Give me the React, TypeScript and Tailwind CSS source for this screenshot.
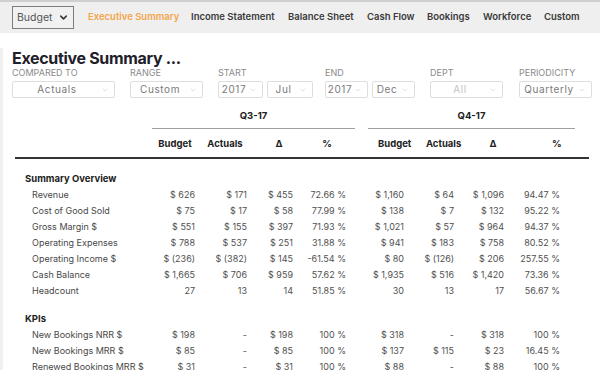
import React from "react";
import { ChevronDown } from "lucide-react";

const F = { fontFamily: "Inter, 'Open Sans', 'Liberation Sans', sans-serif" };

function Sel({ w, text, disabled }: { w: string; text: string; disabled?: boolean }) {
  return (
    <div className={`${w} h-[17px] border border-[#dedede] rounded-[2px] flex items-center bg-white`}>
      <span className={`flex-1 text-center text-[10px] tracking-[0.06em] ${disabled ? "text-[#c4c4c4]" : "text-[#7a7a7a]"}`}>{text}</span>
      <ChevronDown size={8} strokeWidth={1.5} className="text-[#c0c0c0] mr-[5px]" />
    </div>
  );
}

type Row = { label: string; v: string[] };
const summary: Row[] = [
  { label: "Revenue", v: ["$ 626", "$ 171", "$ 455", "72.66 %", "$ 1,160", "$ 64", "$ 1,096", "94.47 %"] },
  { label: "Cost of Good Sold", v: ["$ 75", "$ 17", "$ 58", "77.99 %", "$ 138", "$ 7", "$ 132", "95.22 %"] },
  { label: "Gross Margin $", v: ["$ 551", "$ 155", "$ 397", "71.93 %", "$ 1,021", "$ 57", "$ 964", "94.37 %"] },
  { label: "Operating Expenses", v: ["$ 788", "$ 537", "$ 251", "31.88 %", "$ 941", "$ 183", "$ 758", "80.52 %"] },
  { label: "Operating Income $", v: ["$ (236)", "$ (382)", "$ 145", "-61.54 %", "$ 80", "$ (126)", "$ 206", "257.55 %"] },
  { label: "Cash Balance", v: ["$ 1,665", "$ 706", "$ 959", "57.62 %", "$ 1,935", "$ 516", "$ 1,420", "73.36 %"] },
  { label: "Headcount", v: ["27", "13", "14", "51.85 %", "30", "13", "17", "56.67 %"] },
];
const kpis: Row[] = [
  { label: "New Bookings NRR $", v: ["$ 198", "-", "$ 198", "100 %", "$ 318", "-", "$ 318", "100 %"] },
  { label: "New Bookings MRR $", v: ["$ 85", "-", "$ 85", "100 %", "$ 137", "$ 115", "$ 23", "16.45 %"] },
  { label: "Renewed Bookings MRR $", v: ["$ 31", "-", "$ 31", "100 %", "$ 88", "-", "$ 88", "100 %"] },
];

const grid = "grid grid-cols-[150px_45px_52px_46px_53px_20px_38px_50px_50px_56px_40px]";

function DataRow({ r }: { r: Row }) {
  return (
    <div className={`${grid} h-[16px] items-center text-[9px] text-[#505050]`}>
      <div className="pl-[32px] whitespace-nowrap text-[#484848]">{r.label}</div>
      <div className="text-right whitespace-nowrap">{r.v[0]}</div>
      <div className="text-right whitespace-nowrap">{r.v[1]}</div>
      <div className="text-right whitespace-nowrap">{r.v[2]}</div>
      <div className="text-right whitespace-nowrap">{r.v[3]}</div>
      <div />
      <div className="text-right whitespace-nowrap">{r.v[4]}</div>
      <div className="text-right whitespace-nowrap">{r.v[5]}</div>
      <div className="text-right whitespace-nowrap">{r.v[6]}</div>
      <div className="text-right whitespace-nowrap">{r.v[7]}</div>
      <div />
    </div>
  );
}

export default function App() {
  const nav: [string, string][] = [
    ["Income Statement", "w-[97px]"],
    ["Balance Sheet", "w-[79px]"],
    ["Cash Flow", "w-[60px]"],
    ["Bookings", "w-[56px]"],
    ["Workforce", "w-[61px]"],
    ["Custom", ""],
  ];
  return (
    <div style={F} className="w-[600px] h-[370px] overflow-hidden bg-white">
      {/* top bar */}
      <div className="h-[33px] bg-[#efefef] border-t-2 border-[#cfcfcf] flex items-center">
        <div className="ml-[12px] w-[62px] h-[23px] border-[1.5px] border-[#7d7d7d] bg-[#f1f1f1] flex items-center justify-between px-[4px]">
          <span className="text-[10.5px] text-[#555]">Budget</span>
          <ChevronDown size={11} strokeWidth={3.2} className="text-[#333]" />
        </div>
        <div className="ml-[14px] flex items-center text-[9.5px] font-semibold text-[#3a3a3a] whitespace-nowrap">
          <span className="w-[103px] text-[#f4a54c]">Executive Summary</span>
          {nav.map(([n, w]) => (
            <span key={n} className={w}>{n}</span>
          ))}
        </div>
      </div>

      <div className="border-l-[3px] border-[#f0f0f0] h-[337px]">
        {/* title */}
        <div className="mt-[15px] ml-[9px] h-[20px] leading-[20px] text-[16px] tracking-[-0.02em] font-bold text-[#1f2029]">Executive Summary ...</div>
        {/* filters */}
        <div className="ml-[9px] flex text-[9px] text-[#8a8a8a] uppercase leading-[10px] h-[10px]">
          <div className="w-[118px]">Compared To</div>
          <div className="w-[88px]">Range</div>
          <div className="w-[107px]">Start</div>
          <div className="w-[105px]">End</div>
          <div className="w-[89px]">Dept</div>
          <div>Periodicity</div>
        </div>
        <div className="ml-[9px] mt-[3px] flex">
          <div className="w-[118px]"><Sel w="w-[103px]" text="Actuals" /></div>
          <div className="w-[88px]"><Sel w="w-[73px]" text="Custom" /></div>
          <div className="w-[107px] flex gap-[4px]"><Sel w="w-[45px]" text="2017" /><Sel w="w-[46px]" text="Jul" /></div>
          <div className="w-[105px] flex gap-[4px]"><Sel w="w-[43px]" text="2017" /><Sel w="w-[43px]" text="Dec" /></div>
          <div className="w-[89px]"><Sel w="w-[73px]" text="All" disabled /></div>
          <div><Sel w="w-[73px]" text="Quarterly" /></div>
        </div>

        {/* table */}
        <div className="-ml-[3px]">
          <div className="mt-[10px] flex text-[9.5px] font-bold text-[#222]">
            <div className="ml-[152px] w-[203px] h-[21px] pb-[4px] border-b border-[#a0a0a0] text-center leading-[16px]">Q3-17</div>
            <div className="ml-[13px] w-[207px] h-[21px] pb-[4px] border-b border-[#a0a0a0] text-center leading-[16px]">Q4-17</div>
          </div>
          <div className={`${grid} mt-[7px] h-[16px] items-center text-[9.5px] font-bold text-[#222] whitespace-nowrap`}>
            <div />
            <div className="text-center pl-[5px]">Budget</div>
            <div className="text-center pl-[8px]">Actuals</div>
            <div className="text-center pl-[18px]">Δ</div>
            <div className="text-center pl-[15px]">%</div>
            <div />
            <div className="text-center pl-[12px]">Budget</div>
            <div className="text-center pl-[22px]">Actuals</div>
            <div className="text-center pl-[28px]">Δ</div>
            <div className="text-center pl-[48px]">%</div>
            <div />
          </div>
          <div className="mt-[5px] ml-[15px] w-[574px] h-[2px] bg-[#333]" />

          <div className="mt-[12px] h-[16px] leading-[16px] pl-[25px] text-[9.5px] font-bold text-[#222]">Summary Overview</div>
          {summary.map((r) => (
            <DataRow key={r.label} r={r} />
          ))}
          <div className="mt-[12px] h-[16px] leading-[16px] pl-[25px] text-[9.5px] font-bold text-[#222]">KPIs</div>
          {kpis.map((r) => (
            <DataRow key={r.label} r={r} />
          ))}
        </div>
      </div>
    </div>
  );
}
